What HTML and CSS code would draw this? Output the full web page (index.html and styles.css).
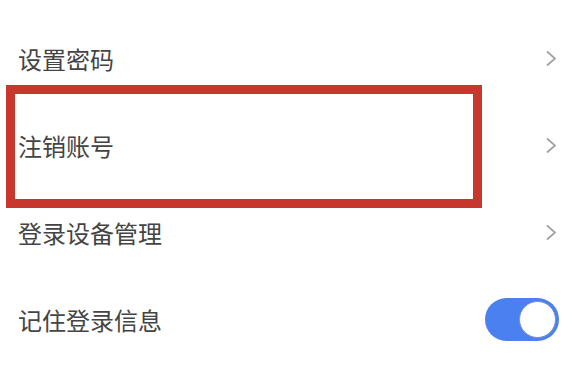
FILE: index.html
```html
<!DOCTYPE html>
<html lang="zh-CN">
<head>
    <meta charset="UTF-8">
    <meta name="viewport" content="width=device-width, initial-scale=1.0">
    <title>账号与安全</title>
    <link rel="stylesheet" href="styles.css">
</head>
<body>
    <div class="settings">
        <div class="row">
            <div class="label">设置密码</div>
            <svg class="chevron" viewBox="0 0 12 18"><path d="M2 2 L10 9 L2 16" /></svg>
        </div>
        <div class="row marked">
            <div class="label">注销账号</div>
            <svg class="chevron" viewBox="0 0 12 18"><path d="M2 2 L10 9 L2 16" /></svg>
            <div class="highlight"></div>
        </div>
        <div class="row">
            <div class="label">登录设备管理</div>
            <svg class="chevron" viewBox="0 0 12 18"><path d="M2 2 L10 9 L2 16" /></svg>
        </div>
        <div class="row">
            <div class="label">记住登录信息</div>
            <div class="switch on"><div class="knob"></div></div>
        </div>
    </div>
</body>
</html>
```

FILE: styles.css
```css
* {
    margin: 0;
    padding: 0;
    box-sizing: border-box;
}
body {
    background: #ffffff;
    font-family: "Noto Sans CJK SC", "Noto Sans", sans-serif;
    color: #333333;
}
.settings {
    display: flex;
    flex-direction: column;
    padding: 15px 16px 0 18px;
}
.row {
    position: relative;
    display: flex;
    justify-content: space-between;
    align-items: center;
    height: 87px;
}
.label {
    font-size: 24px;
    line-height: 1;
    color: #444444;
}
.chevron {
    width: 12px;
    height: 19px;
    fill: none;
    stroke: #a0a0a0;
    stroke-width: 1.7;
}
.highlight {
    position: absolute;
    left: -12px;
    top: -17px;
    width: 476px;
    height: 123px;
    border: 9px solid #c8372d;
}
.switch {
    width: 74px;
    height: 43px;
    border-radius: 22px;
    background: #4a80ef;
    padding: 3px;
    display: flex;
    justify-content: flex-end;
    margin-right: -2px;
}
.knob {
    width: 37px;
    height: 37px;
    border-radius: 50%;
    background: #ffffff;
    border: 1.5px solid #7c8fc0;
}
```
